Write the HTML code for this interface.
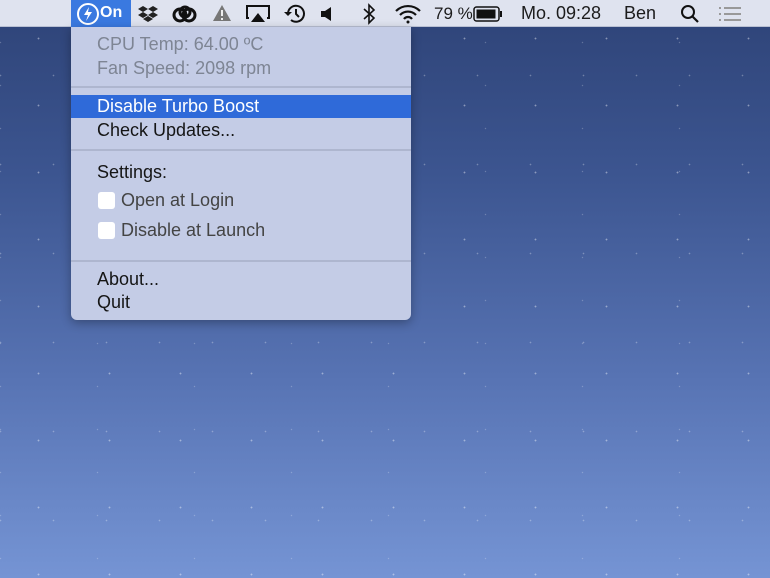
<!DOCTYPE html>
<html><head><meta charset="utf-8"><style>
*{margin:0;padding:0;box-sizing:border-box}
body{width:770px;height:578px;overflow:hidden;font-family:"Liberation Sans",sans-serif;position:relative;
background:linear-gradient(180deg,#2e4377 0%,#3c5590 30%,#5773b3 65%,#7594d4 100%)}
.stars{position:absolute;inset:0;background-image:
radial-gradient(circle,rgba(255,255,255,.7) 0.7px,transparent 1.1px),
radial-gradient(circle,rgba(255,255,255,.5) 0.6px,transparent 1px),
radial-gradient(circle,rgba(255,255,255,.4) 0.5px,transparent 0.9px);
background-size:71px 67px,53px 89px,97px 43px;background-position:3px 5px,27px 31px,49px 21px;opacity:.6}
.bar{position:absolute;left:0;top:0;width:770px;height:27px;background:#dfe3ef;border-bottom:1px solid #b9c0d3;color:#1c1c1c;font-size:18px}
.bar span{position:absolute;top:3px}
.on{position:absolute;left:71px;top:0;width:60px;height:27px;background:#3a79e0;color:#fff}
.menu{position:absolute;left:71px;top:27px;width:340px;height:293px;background:#c4cce6;border-radius:0 0 6px 6px;box-shadow:0 3px 10px rgba(0,0,0,.3);font-size:18px;color:#151515}
.menu div{position:absolute;left:26px}
.g{color:#7e8594}
.sep{position:absolute;left:0!important;width:340px;height:2px;background:#aeb6cf}
.hl{position:absolute;left:0!important;width:340px;height:23px;background:#2f6ad9;top:68px}
.cb{position:absolute;width:17px;height:17px;background:#fff;border-radius:3px;left:27px!important}
</style></head><body>
<div class="stars"></div>
<div class="bar">
<div class="on"><svg width="24" height="24" style="position:absolute;left:5px;top:2px" viewBox="0 0 24 24"><circle cx="12" cy="12" r="10" fill="none" stroke="#fff" stroke-width="2"/><path d="M13 5 L8 13 H12 L10 19 L16 10 H12 Z" fill="#fff"/></svg><span style="left:29px;top:4px;font-weight:bold;font-size:16px;color:#fff">On</span></div>
<svg style="position:absolute;left:138px;top:5px" width="20" height="18" viewBox="0 0 20 18"><path d="M5 1 L10 4 L5 7 L0 4Z M15 1 L20 4 L15 7 L10 4Z M5 7 L10 10 L5 13 L0 10Z M15 7 L20 10 L15 13 L10 10Z M5 14 L10 17 L15 14 L10 11Z" fill="#222"/></svg>
<svg style="position:absolute;left:172px;top:5px" width="26" height="18" viewBox="0 0 26 18"><g fill="none" stroke="#111" stroke-width="3"><circle cx="8" cy="10" r="6"/><circle cx="17" cy="10" r="6"/><circle cx="13" cy="7" r="5"/></g></svg>
<svg style="position:absolute;left:212px;top:4px" width="20" height="19" viewBox="0 0 20 19"><path d="M10 1 L19 17 H1 Z" fill="#777"/><path d="M10 6V12M10 14v2" stroke="#eee" stroke-width="2"/></svg>
<svg style="position:absolute;left:246px;top:4px" width="24" height="20" viewBox="0 0 24 20"><path d="M3 14H1V2H23V14H21" fill="none" stroke="#111" stroke-width="2"/><path d="M12 9L19 18H5Z" fill="#111"/></svg>
<svg style="position:absolute;left:283px;top:3px" width="24" height="22" viewBox="0 0 24 22"><path d="M5 11A8 8 0 1 1 8 17" fill="none" stroke="#111" stroke-width="2"/><path d="M1 9L5 13L9 9" fill="#111"/><path d="M13 6V11L16 14" fill="none" stroke="#111" stroke-width="2"/></svg>
<svg style="position:absolute;left:320px;top:6px" width="14" height="16" viewBox="0 0 14 16"><path d="M1 5H5L11 1V15L5 11H1Z" fill="#111"/></svg>
<svg style="position:absolute;left:362px;top:3px" width="14" height="22" viewBox="0 0 14 22"><path d="M2 6L12 15L7 20V2L12 7L2 16" fill="none" stroke="#111" stroke-width="1.6"/></svg>
<svg style="position:absolute;left:394px;top:4px" width="28" height="20" viewBox="0 0 28 20"><g fill="none" stroke="#111" stroke-width="2.2"><path d="M2 7A17 17 0 0 1 26 7"/><path d="M6 11A11 11 0 0 1 22 11"/><path d="M10 15A5 5 0 0 1 18 15"/></g><circle cx="14" cy="18" r="1.5" fill="#111"/></svg>
<span style="left:434px;font-size:17px;top:4px">79 %</span>
<svg style="position:absolute;left:473px;top:6px" width="30" height="16" viewBox="0 0 30 16"><rect x="1" y="1" width="25" height="14" rx="2.5" fill="none" stroke="#111" stroke-width="1.5"/><rect x="3.5" y="3.5" width="19" height="9" fill="#111"/><rect x="27" y="5" width="2" height="6" fill="#111"/></svg>
<span style="left:521px">Mo. 09:28</span>
<span style="left:624px">Ben</span>
<svg style="position:absolute;left:680px;top:4px" width="20" height="20" viewBox="0 0 20 20"><circle cx="8" cy="8" r="6" fill="none" stroke="#111" stroke-width="2"/><path d="M12.5 12.5L18 18" stroke="#111" stroke-width="2.2"/></svg>
<svg style="position:absolute;left:718px;top:6px" width="24" height="16" viewBox="0 0 24 16"><g stroke="#999" stroke-width="2"><path d="M1 2h2M6 2h17M1 8h2M6 8h17M1 14h2M6 14h17"/></g></svg>
</div>
<div class="menu">
<div class="g" style="top:7px">CPU Temp: 64.00 ºC</div>
<div class="g" style="top:31px">Fan Speed: 2098 rpm</div>
<div class="sep" style="top:59px"></div>
<div class="hl"></div>
<div style="top:69px;color:#fff">Disable Turbo Boost</div>
<div style="top:93px">Check Updates...</div>
<div class="sep" style="top:122px"></div>
<div style="top:135px">Settings:</div>
<div class="cb" style="top:165px"></div>
<div style="top:163px;left:50px;color:#444">Open at Login</div>
<div class="cb" style="top:195px"></div>
<div style="top:193px;left:50px;color:#444">Disable at Launch</div>
<div class="sep" style="top:233px"></div>
<div style="top:242px">About...</div>
<div style="top:265px">Quit</div>
</div>
</body></html>
